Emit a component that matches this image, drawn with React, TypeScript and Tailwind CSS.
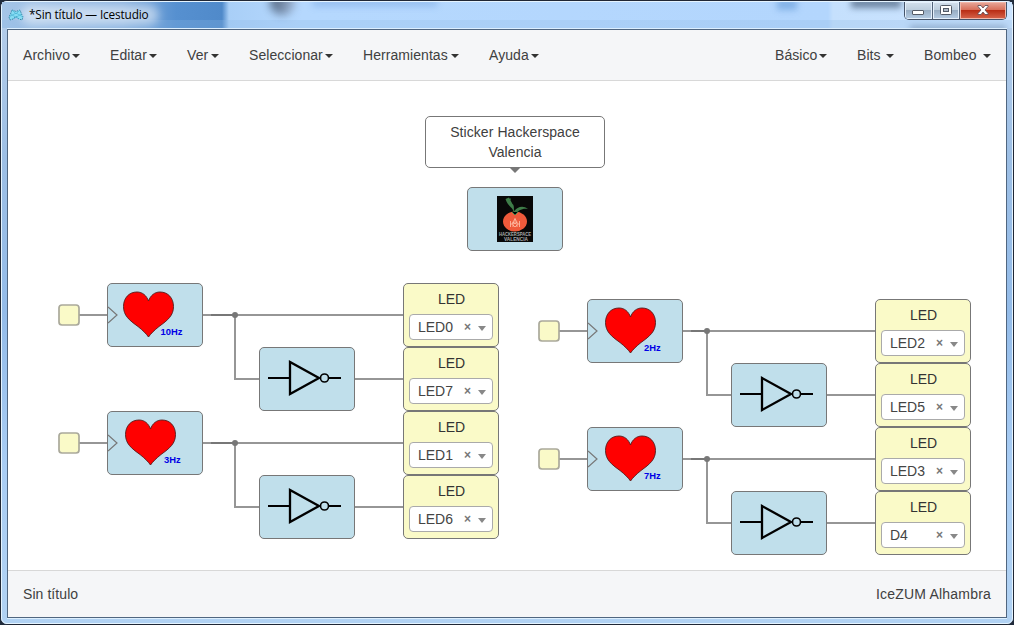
import React from "react";

type Point = { x: number; y: number };

const leftMenus = [
  { label: "Archivo", width: "w-[57px]" },
  { label: "Editar", width: "w-[47px]" },
  { label: "Ver", width: "w-[32px]" },
  { label: "Seleccionar", width: "w-[84px]" },
  { label: "Herramientas", width: "w-[96px]" },
  { label: "Ayuda", width: "w-[50px]" },
];
const rightMenus = [
  { label: "Básico", width: "w-[52px]" },
  { label: "Bits", width: "w-[37px]" },
  { label: "Bombeo", width: "w-[67px]" },
];

const clocks = [
  { x: 99, y: 202, hz: "10Hz", heart: 16, text: 53.5 },
  { x: 99, y: 330, hz: "3Hz", heart: 18, text: 57 },
  { x: 579, y: 218, hz: "2Hz", heart: 18, text: 57 },
  { x: 579, y: 346, hz: "7Hz", heart: 18, text: 57 },
];

const inverters: Point[] = [
  { x: 251, y: 266 },
  { x: 251, y: 394 },
  { x: 723, y: 282 },
  { x: 723, y: 410 },
];

const leds = [
  { x: 395, y: 202, pin: "LED0" },
  { x: 395, y: 266, pin: "LED7" },
  { x: 395, y: 330, pin: "LED1" },
  { x: 395, y: 394, pin: "LED6" },
  { x: 867, y: 218, pin: "LED2" },
  { x: 867, y: 282, pin: "LED5" },
  { x: 867, y: 346, pin: "LED3" },
  { x: 867, y: 410, pin: "D4" },
];

const nets = [
  { y: 234, port: 61, clock: 99, junction: 227, inv: 251, led: 395 },
  { y: 362, port: 61, clock: 99, junction: 227, inv: 251, led: 395 },
  { y: 250, port: 541, clock: 579, junction: 699, inv: 723, led: 867 },
  { y: 378, port: 541, clock: 579, junction: 699, inv: 723, led: 867 },
];

function Menu({ label, width }: { label: string; width: string }) {
  return (
    <button className={`flex items-center justify-between whitespace-nowrap text-sm leading-5 tracking-[0.06px] text-[#404040] ${width}`}>
      {label}
      <svg className="mt-px shrink-0" width="8" height="4" viewBox="0 0 8 4">
        <path d="M0 0H8L4 4Z" fill="#333" />
      </svg>
    </button>
  );
}

function IceLogo() {
  return (
    <svg width="16" height="14" viewBox="0 0 16 14" fill="none">
      <path d="M4 2L8 3.5L12 2L13.5 6L15 9L14 12L11 11L8 8.5L5 11L2 12L1 9L2.5 6Z" fill="#86dcf3" stroke="#3985a5" strokeDasharray="1.5 1" />
      <path d="M4 2L8 6L12 2M1 9L8 5L15 9M2.5 6L11 11M13.5 6L5 11" stroke="#4cb4d6" strokeWidth="0.7" />
    </svg>
  );
}

function TitleBar() {
  return (
    <header className="relative flex h-[26px] shrink-0 items-start justify-between overflow-hidden bg-[linear-gradient(90deg,#a5c5e8_0px,#89b1df_120px,#5690d0_174px,#508aca_220px,#a9cff7_227px,#b5d8fe_300px,#b3d6fd_826px,#c5e0fd_831px,#cce4ff_990px)]">
      <div className="absolute inset-x-0 bottom-0 h-2 bg-[#8db8e5]/25" />
      <div className="absolute left-[268px] top-[-12px] h-[25px] w-[25px] rounded-full bg-[linear-gradient(90deg,#36475f,#9baecb)] opacity-80 blur-[4px]" />
      <div className="absolute left-[310px] top-[-3px] h-2 w-[126px] rounded bg-[#6499da]/35 blur-[3px]" />
      <div className="absolute left-[775px] top-[-3px] h-[11px] w-5 bg-[#649bd8]/60 blur-[3px]" />
      <div className="absolute left-[849px] top-[-4px] h-[10px] w-[50px] bg-[#334b69]/60 blur-[3px]" />
      <div className="absolute left-[908px] top-[24px] h-[6px] w-[96px] bg-[#334b69]/35 blur-[3px]" />
      <div className="absolute left-[19px] top-[3px] h-[20px] w-[138px] rounded-full bg-white/50 blur-[5px]" />
      <div className="relative flex h-[26px] items-center gap-[5px] pl-[6px] font-['Open_Sans','Noto_Sans',sans-serif] text-[11.8px] tracking-[-0.14px] text-black">
        <IceLogo />
        <span>*Sin título — Icestudio</span>
      </div>
      <div className="relative mr-[5px] flex h-[18px] w-[103px] overflow-hidden rounded-b-[5px] border border-t-0 border-[#45546a]">
        <button aria-label="Minimizar" className="flex w-[28px] items-center justify-center border-r border-[#53647a] bg-[linear-gradient(#d3e0ed_0,#bccddd_48%,#98adc3_50%,#b6cde5_100%)] pt-[5px] shadow-[inset_0_0_0_1px_#e4effb]">
          <svg width="13" height="6" viewBox="0 0 13 6"><rect x="0.5" y="0.5" width="11" height="4" rx="0.5" fill="#fff" stroke="#555b67" /></svg>
        </button>
        <button aria-label="Maximizar" className="flex w-[27px] items-center justify-center border-r border-[#53647a] bg-[linear-gradient(#d3e0ed_0,#bccddd_48%,#98adc3_50%,#b6cde5_100%)] shadow-[inset_0_0_0_1px_#e4effb]">
          <svg className="-mt-px" width="12" height="10" viewBox="0 0 12 10" stroke="#535b68"><rect x="0.5" y="0.5" width="11" height="9" rx="1" fill="#fff" /><rect x="3.5" y="3.5" width="5" height="3" fill="#adb9c7" /></svg>
        </button>
        <button aria-label="Cerrar" className="flex flex-1 items-center justify-center bg-[linear-gradient(#e8a99c_0,#d8705b_45%,#b92e16_50%,#d7664d_100%)] shadow-[inset_0_0_0_1px_#f1b7aa]">
          <svg className="-mt-px" width="12" height="10" viewBox="0 0 12 10"><path d="M1 .5H4L6 3L8 .5H11V1.5L8 5L11 8.5V9.5H8L6 7L4 9.5H1V8.5L4 5L1 1.5Z" fill="#fff" stroke="#65515a" strokeWidth="0.9" /></svg>
        </button>
      </div>
    </header>
  );
}

function Wires() {
  return (
    <svg className="absolute inset-0" width="998" height="489" viewBox="0 0 998 489" fill="none">
      {nets.map((n) => (
        <g key={`${n.port}-${n.y}`} stroke="#969696" strokeWidth="2">
          <path d={`M${n.port + 10} ${n.y}H${n.clock}M${n.clock + 95} ${n.y}H${n.led}`} />
          <path d={`M${n.junction} ${n.y}V${n.y + 64}H${n.inv}M${n.inv + 95} ${n.y + 64}H${n.led}`} />
          <path d={`M${n.clock + 104} ${n.y}H${n.junction}`} stroke="#777" />
          <circle cx={n.junction} cy={n.y} r="3" fill="#777" stroke="none" />
          <rect x={n.port - 10} y={n.y - 10} width="20" height="20" rx="3" fill="#fafac8" stroke="#aaa99b" strokeWidth="1.7" />
        </g>
      ))}
    </svg>
  );
}

function Clock({ x, y, hz, heart, text }: (typeof clocks)[number]) {
  return (
    <div className="absolute h-16 w-24 rounded-[5px] border border-[#777] bg-[#c0dfeb]" style={{ left: x, top: y }}>
      <svg className="block" width="94" height="62" viewBox="1 1 94 62">
        <path d="M1 24L10 32L1 40" fill="none" stroke="#777" strokeWidth="1.2" />
        <path transform={`translate(${heart} 8.5)`} d="M25.5 9.5C23.5 4 19.5.5 14 .5C6 .5.5 6.5.5 15C.5 24 6 28.5 15 35C20 39 23.5 42.5 25.5 45.5C27.5 42.5 31 39 36 35C45 28.5 50.5 24 50.5 15C50.5 6.5 45 .5 37 .5C31.5 .5 27.5 4 25.5 9.5Z" fill="#f00" stroke="#541b1b" strokeWidth="0.9" />
        <text x={text} y="52" fill="#0000e6" fontFamily="Liberation Sans, Arial, sans-serif" fontWeight="700" fontSize="9.4">{hz}</text>
      </svg>
    </div>
  );
}

function Inverter({ x, y }: Point) {
  return (
    <div className="absolute h-16 w-24 rounded-[5px] border border-[#777] bg-[#c0dfeb]" style={{ left: x, top: y }}>
      <svg className="block" width="94" height="62" viewBox="1 1 94 62" fill="none" stroke="#000" strokeWidth="2">
        <path d="M9 31H31M70 31H82" />
        <path d="M31 15V47L60 31Z" strokeWidth="2.3" />
        <circle cx="65.5" cy="31" r="4" strokeWidth="1.6" />
      </svg>
    </div>
  );
}

function Led({ x, y, pin }: (typeof leds)[number]) {
  return (
    <div className="absolute flex h-16 w-24 flex-col rounded-[5px] border border-[#777] bg-[#fafac8] px-[5px] pt-[5px] text-[#333]" style={{ left: x, top: y }}>
      <div className="pl-px text-center text-sm leading-5">LED</div>
      <div className="mt-[5px] flex h-[26px] items-center rounded-[4px] border border-[#aaa] bg-white pl-2 pr-[6px] text-[#444]">
        <span className="flex-1 text-sm leading-6">{pin}</span>
        <span className="mr-[7px] text-xs font-bold leading-6 text-[#777]">×</span>
        <svg className="mt-[3px]" width="8" height="5" viewBox="0 0 8 5"><path d="M0 0H8L4 5Z" fill="#888" /></svg>
      </div>
    </div>
  );
}

function Sticker() {
  return (
    <>
      <div className="absolute left-[417px] top-[35px] h-[52px] w-[180px] rounded-[5px] border border-[#777] bg-white px-5 pt-[5px] text-center text-sm leading-5 tracking-[0.07px] text-[#404040]">
        Sticker Hackerspace Valencia
        <svg className="absolute left-[84px] top-[51px]" width="10" height="6" viewBox="0 0 10 6"><path d="M0 0H10L5 5Z" fill="#777" /></svg>
      </div>
      <div className="absolute left-[459px] top-[106px] flex h-16 w-24 items-center justify-center rounded-[5px] border border-[#777] bg-[#c0dfeb]">
        <svg width="36" height="46" viewBox="0 0 36 46">
          <rect width="36" height="46" fill="#080808" />
          <ellipse cx="18" cy="25.5" rx="12" ry="10" fill="#ef5a3b" />
          <path d="M17 17C16 11 11 11 8.5 3L12 1.5L15.5 8C18 10 16 14 17.5 15C20 11 26 9 31 13C25 12 21 15 18 18Z" fill="#3f7d49" />
          <path d="M10 4L14 3M15 16L18 19L21 16" stroke="#3d824a" />
          <path d="M13.5 25V31M13.5 28H16V26M16 26V31M16 29L18 31L20 29M20 26V31M20 28H22.5V25M22.5 28V31M18 22V27M16 26L18 23L20 26L18 28Z" fill="none" stroke="#ffc5ad" strokeWidth="0.8" />
          <text x="18" y="40" textAnchor="middle" textLength="32" lengthAdjust="spacingAndGlyphs" fill="#aaa" fontFamily="Liberation Sans, Arial, sans-serif" fontWeight="700" fontSize="4.8">HACKERSPACE</text>
          <text x="19" y="44.5" textAnchor="middle" textLength="24" lengthAdjust="spacingAndGlyphs" fill="#aaa" fontFamily="Liberation Sans, Arial, sans-serif" fontWeight="700" fontSize="4.8">VALENCIA</text>
        </svg>
      </div>
    </>
  );
}

export default function App() {
  return (
    <div className="h-[625px] w-[1014px] overflow-hidden bg-[#202b3b] font-['Liberation_Sans',Arial,sans-serif]">
      <div className="flex h-[625px] w-[1014px] flex-col rounded-[7px] border border-[#202735] bg-[#b5d5f4] bg-[linear-gradient(#b7cfeb,#9dbfe5_25%,#94bce9_50%,#a9cdf4_75%,#b1d2f3)]">
        <div className="flex min-h-0 flex-1 flex-col rounded-[6px] border border-[#e5f4ff] pb-[4px]">
          <TitleBar />
          <div className="mx-[5px] flex min-h-0 flex-1 flex-col border border-[#dcefff]">
            <main className="-mx-px flex min-h-0 flex-1 flex-col border border-[#506680] bg-white">
              <nav className="flex h-[51px] shrink-0 items-center justify-between border-b border-[#d8d8d8] bg-[#f5f6f8] px-[15px]">
                <div className="flex gap-[30px]">{leftMenus.map((menu) => <Menu key={menu.label} {...menu} />)}</div>
                <div className="flex gap-[30px]">{rightMenus.map((menu) => <Menu key={menu.label} {...menu} />)}</div>
              </nav>
              <section className="relative h-[489px] shrink-0 overflow-hidden bg-white">
                <Wires />
                <Sticker />
                {clocks.map((clock) => <Clock key={clock.hz} {...clock} />)}
                {inverters.map((node) => <Inverter key={`${node.x}-${node.y}`} {...node} />)}
                {leds.map((led) => <Led key={led.pin} {...led} />)}
              </section>
              <footer className="flex min-h-0 flex-1 items-center justify-between border-t border-[#d8d8d8] bg-[#f5f6f8] px-[15px] text-sm tracking-[0.07px] text-[#404040]">
                <span>Sin título</span>
                <span className="tracking-[0.2px]">IceZUM Alhambra</span>
              </footer>
            </main>
          </div>
        </div>
      </div>
    </div>
  );
}
